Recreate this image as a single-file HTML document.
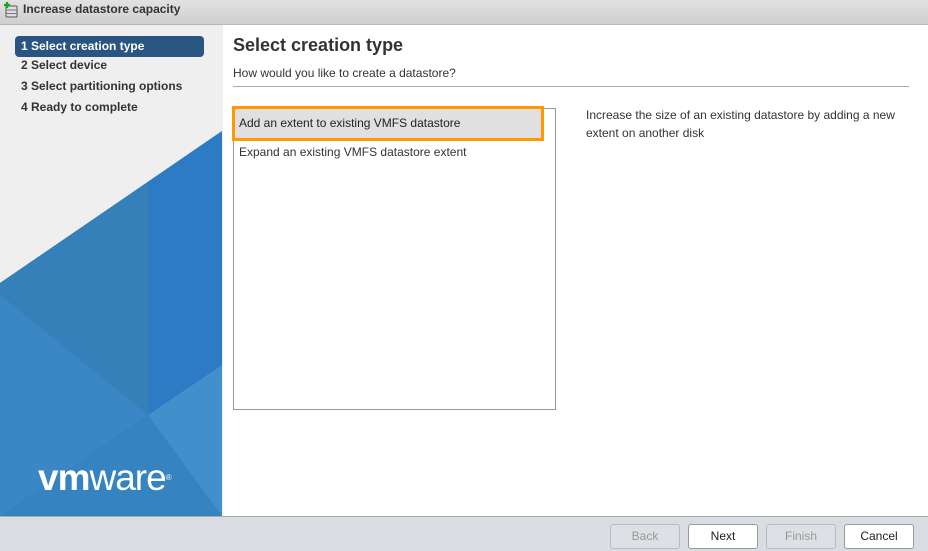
<!DOCTYPE html>
<html><head><style>
*{margin:0;padding:0;box-sizing:border-box}
body{width:928px;height:551px;overflow:hidden;font-family:"Liberation Sans",sans-serif;background:#fff;position:relative}
.title{position:absolute;left:0;top:0;width:928px;height:25px;background:linear-gradient(#e2e2e2,#cfcfcf);border-bottom:1px solid #b8b8b8;font-size:12px;font-weight:bold;color:#333;line-height:19px;padding-left:23px}
.side{position:absolute;left:0;top:25px;width:223px;height:491px;background:#efefef;overflow:hidden}
.step{position:absolute;left:15px;width:189px;height:21px;font-size:12px;font-weight:bold;color:#333;line-height:21px;padding-left:6px}
.step.sel{background:#2a5482;color:#fff;border-radius:4px}
.bottom{position:absolute;left:0;top:516px;width:928px;height:35px;background:#d9dde2;border-top:1px solid #aaa}
.btn{position:absolute;top:7px;height:25px;width:70px;border:1px solid #999;border-radius:3px;background:#fff;font-size:12px;text-align:center;line-height:23px;color:#222}
.btn.dis{background:#dde0e4;border-color:#b8bcc0;color:#999}
</style></head><body>
<div class="title">Increase datastore capacity</div>
<svg style="position:absolute;left:4px;top:2px" width="14" height="16" viewBox="0 0 14 16"><rect x="2" y="4" width="11" height="11" rx="1" fill="#ddd" stroke="#555"/><line x1="2" y1="8" x2="13" y2="8" stroke="#777"/><line x1="2" y1="11.5" x2="13" y2="11.5" stroke="#777"/><path d="M3 0v6M0 3h6" stroke="#1a1" stroke-width="2.2"/></svg>
<div class="side">
<svg width="223" height="491" style="position:absolute;left:0;top:0">
<polygon points="0,258 222,106 222,491 0,491" fill="#3a80bd"/>
<polygon points="148,157 222,106 222,491 148,491" fill="#2c7bc4"/>
<polygon points="0,258 148,157 148,390 0,270" fill="#367fb8" opacity=".9"/>
<polygon points="0,270 148,390 0,491" fill="#3b86c4"/>
<polygon points="148,390 222,340 222,491 148,491" fill="#428fcc"/>
<polygon points="0,491 148,390 222,491" fill="#3583c0"/>
</svg>
<div class="step sel" style="top:11px">1 Select creation type</div>
<div class="step" style="top:30px">2 Select device</div>
<div class="step" style="top:51px">3 Select partitioning options</div>
<div class="step" style="top:72px">4 Ready to complete</div>
<div style="position:absolute;left:38px;top:433px;color:#fff;font-size:37px;letter-spacing:-1px;line-height:40px"><b style="font-weight:900">vm</b>ware<span style="font-size:8px;vertical-align:top">®</span></div>
</div>
<div style="position:absolute;left:233px;top:35px;font-size:18px;font-weight:bold;color:#333">Select creation type</div>
<div style="position:absolute;left:233px;top:66px;font-size:12px;color:#333">How would you like to create a datastore?</div>
<div style="position:absolute;left:233px;top:86px;width:676px;height:1px;background:#aaa"></div>
<div style="position:absolute;left:233px;top:108px;width:323px;height:302px;border:1px solid #999"></div>
<div style="position:absolute;left:232px;top:106px;width:312px;height:35px;border:3px solid #f90;background:#e0e0e0;font-size:12px;color:#222;line-height:28px;padding-left:4px">Add an extent to existing VMFS datastore</div>
<div style="position:absolute;left:239px;top:145px;font-size:12px;color:#333">Expand an existing VMFS datastore extent</div>
<div style="position:absolute;left:586px;top:106px;width:320px;font-size:12px;color:#333;line-height:18px">Increase the size of an existing datastore by adding a new extent on another disk</div>
<div class="bottom">
<div class="btn dis" style="left:610px">Back</div>
<div class="btn" style="left:688px">Next</div>
<div class="btn dis" style="left:766px">Finish</div>
<div class="btn" style="left:844px">Cancel</div>
</div>
</body></html>
